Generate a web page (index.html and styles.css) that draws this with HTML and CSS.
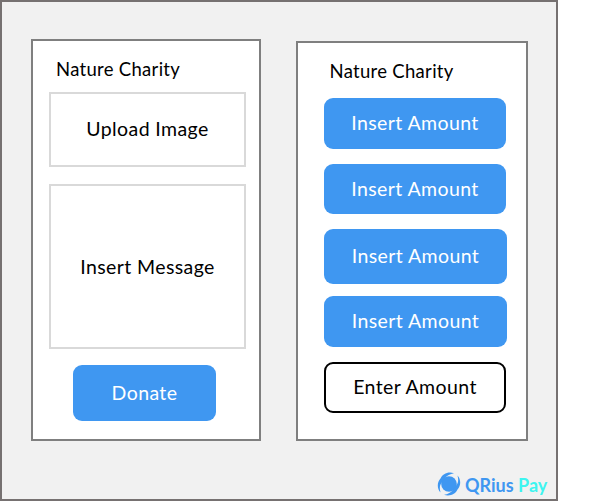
FILE: index.html
```html
<!DOCTYPE html>
<html lang="en">

<head>
    <meta charset="UTF-8">
    <meta name="viewport" content="width=device-width, initial-scale=1.0">
    <title>QRius Pay</title>
    <link rel="stylesheet" href="styles.css">
</head>

<body>
    <div class="page">
        <div class="panels">
            <div class="panel donate">
                <h2>Nature Charity</h2>
                <div class="box image"><span>Upload Image</span></div>
                <div class="box message"><span>Insert Message</span></div>
                <button class="btn send"><span>Donate</span></button>
            </div>
            <div class="panel amounts">
                <h2>Nature Charity</h2>
                <button class="btn first"><span>Insert Amount</span></button>
                <button class="btn second"><span>Insert Amount</span></button>
                <button class="btn third"><span>Insert Amount</span></button>
                <button class="btn fourth"><span>Insert Amount</span></button>
                <button class="btn enter"><span>Enter Amount</span></button>
            </div>
        </div>
        <div class="logo">
            <svg width="24" height="24" viewBox="0 0 24 24">
                <circle fill="#3f97f1" cx="12" cy="12" r="7.8" />
                <path fill="#3f97f1" d="M17 1.2C11 -0.800 5.500 2 3.500 6.500C0 10 -0.200 16.500 3.500 20.500C2.300 16 2.800 13 4.500 11L8 6C10 3.500 13 1.800 17 1.200Z" />
                <path fill="#3f97f1" d="M7 22.800C13 24.800 18.500 22 20.500 17.500C24 14 24.200 7.500 20.500 3.500C21.700 8 21.200 11 19.500 13L16 18C14 20.500 11 22.200 7 22.800Z" />
            </svg>
            <p class="name"><span class="qrius">QRius</span> <span class="pay">Pay</span></p>
        </div>
    </div>
</body>

</html>
```
FILE: styles.css
```css
* {
    box-sizing: border-box;
}

body {
    margin: 0;
    background-color: white;
    font-family: Lato, sans-serif;
}

.page {
    width: 558px;
    height: 501px;
    padding: 37px 28px 0 29px;
    border: 2px solid #767171;
    background-color: #f1f1f1;
}

.panels {
    display: flex;
    justify-content: space-between;
    align-items: flex-end;
}

.panel {
    display: flex;
    flex-direction: column;
    border: 2px solid #7f7f7f;
    background-color: white;
}

.donate {
    width: 230px;
    height: 402px;
    padding: 0 13px 0 16px;
}

.amounts {
    width: 232px;
    height: 400px;
    padding: 0 18px 0 26px;
}

h2 {
    height: 51px;
    margin: 0;
    padding: 16px 0 0 7px;
    font-size: 18.5px;
    font-weight: 400;
    letter-spacing: 0.3px;
    line-height: 24px;
    white-space: nowrap;
}

.amounts h2 {
    height: 55px;
    padding-left: 5.5px;
}

.box {
    display: flex;
    justify-content: center;
    align-items: center;
    padding-bottom: 2px;
    border: 2px solid #d9d9d9;
    font-size: 19.5px;
    letter-spacing: 0.4px;
}

.image {
    height: 75px;
    margin-bottom: 17px;
}

.message {
    height: 165px;
    margin-bottom: 16px;
    padding-bottom: 0;
}

.btn {
    display: flex;
    justify-content: center;
    align-items: center;
    width: 182px;
    height: 51px;
    padding: 0 0 2px;
    border: none;
    border-radius: 9px;
    background-color: #3f97f1;
    color: white;
    font-family: inherit;
    font-size: 19.5px;
    letter-spacing: 0.4px;
}

.send {
    width: 143px;
    height: 56px;
    margin-left: 24px;
}

.first {
    margin-bottom: 15px;
}

.second {
    height: 50px;
    margin-bottom: 15px;
}

.third {
    width: 183px;
    height: 55px;
    margin-bottom: 12px;
}

.fourth {
    width: 183px;
    margin-bottom: 15px;
}

.enter {
    border: 2px solid black;
    background-color: white;
    color: black;
}

.logo {
    display: flex;
    align-items: center;
    gap: 4px;
    width: 520px;
    padding: 31px 0 0 406px;
}

.logo svg {
    flex-shrink: 0;
}

.name {
    margin: 2px 0 0;
    font-size: 18px;
    font-weight: 700;
    white-space: nowrap;
}

.qrius {
    color: #3f97f1;
}

.pay {
    color: #3df5f0;
}
```
